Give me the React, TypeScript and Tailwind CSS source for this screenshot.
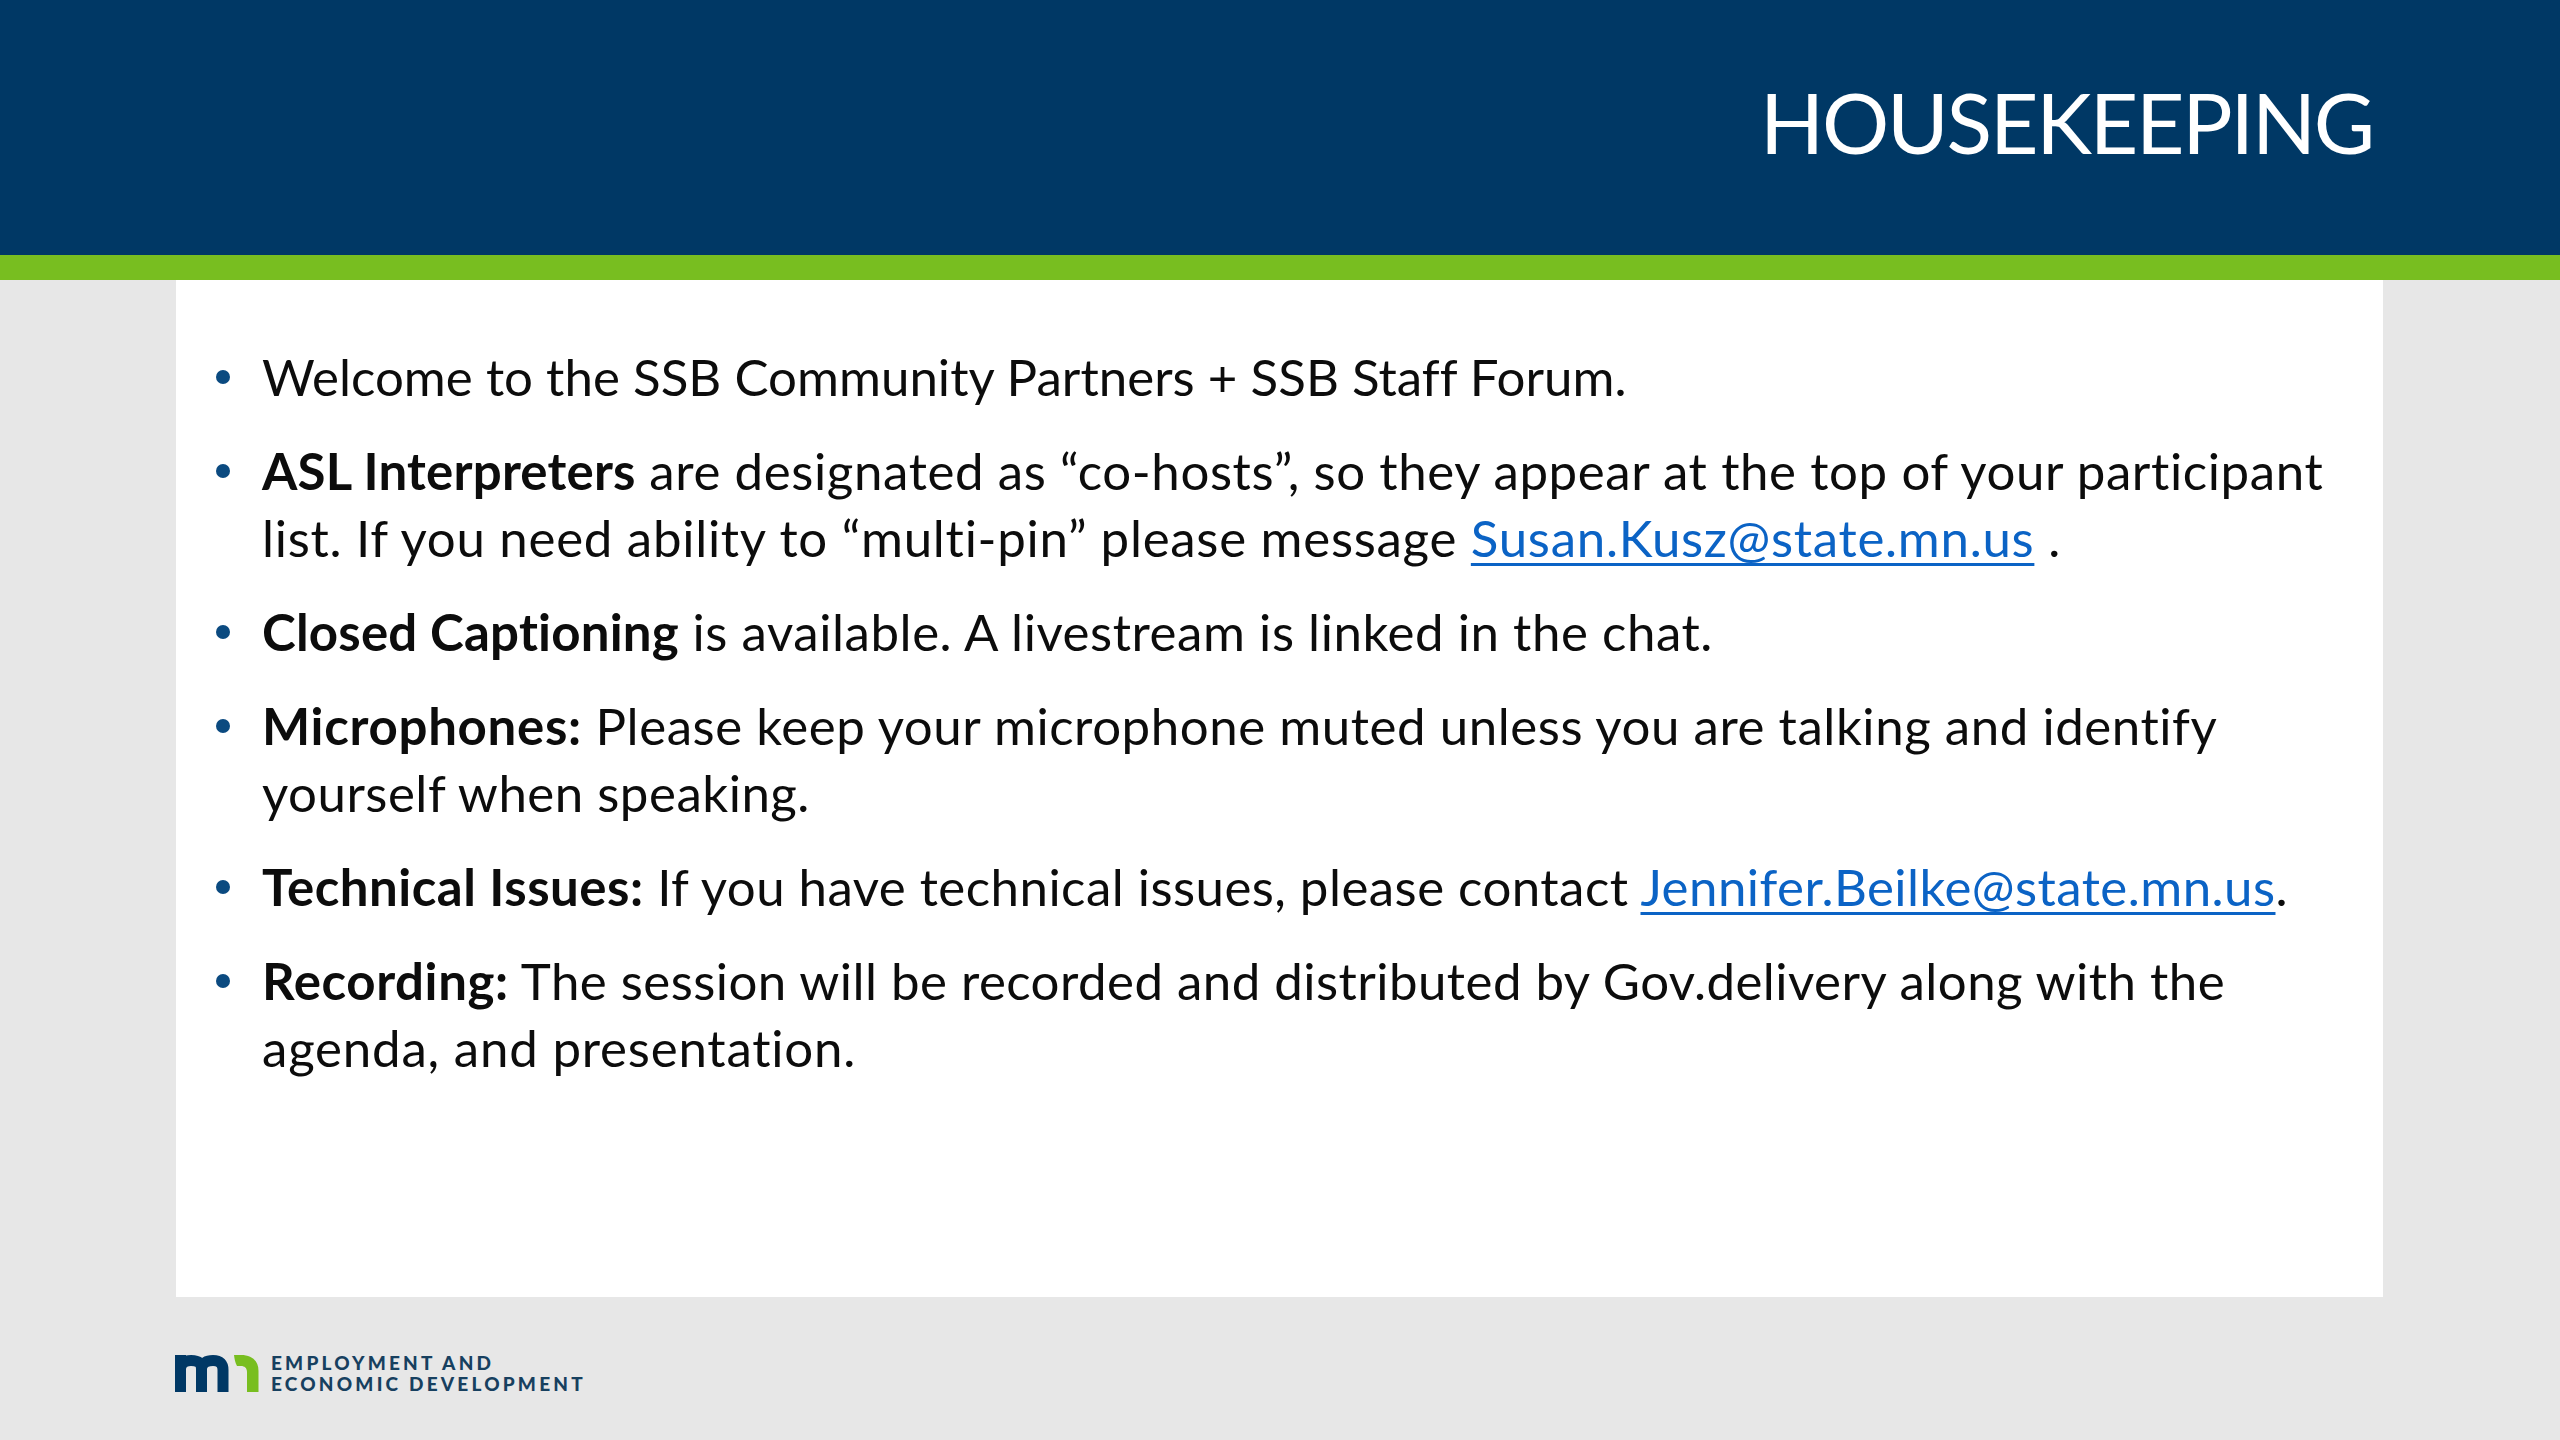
type Line = { t: string; c: React.ReactNode };

const B = ({ t, children }: { t: string; children: React.ReactNode }) => <b className={`font-bold ${t}`}>{children}</b>;
const A = ({ children }: { children: React.ReactNode }) => (
  <a className="text-[#0b63c5] underline underline-offset-[6px] decoration-[3px]">{children}</a>
);

const items: Line[][] = [
  [{ t: "tracking-[0.03px]", c: <>Welcome to the SSB Community Partners + SSB Staff Forum.</> }],
  [
    { t: "tracking-[0.6px]", c: <><B t="tracking-[0.2px]">ASL Interpreters</B> are designated as “co-hosts”, so they appear at the top of your participant</> },
    { t: "tracking-[0.72px]", c: <>list. If you need ability to “multi-pin” please message <A>Susan.Kusz@state.mn.us</A> .</> },
  ],
  [{ t: "tracking-[0.55px]", c: <><B t="tracking-[0.2px]">Closed Captioning</B> is available. A livestream is linked in the chat.</> }],
  [
    { t: "tracking-[0.55px]", c: <><B t="tracking-[0.7px]">Microphones:</B> Please keep your microphone muted unless you are talking and identify</> },
    { t: "tracking-[0.5px]", c: <>yourself when speaking.</> },
  ],
  [{ t: "tracking-[0.46px]", c: <><B t="tracking-[0.5px]">Technical Issues:</B> If you have technical issues, please contact <A>Jennifer.Beilke@state.mn.us</A>.</> }],
  [
    { t: "tracking-[0.46px]", c: <><B t="tracking-[0.6px]">Recording:</B> The session will be recorded and distributed by Gov.delivery along with the</> },
    { t: "tracking-[0.8px]", c: <>agenda, and presentation.</> },
  ],
];

export default function App() {
  return (
    <div className="w-[2560px] h-[1440px] overflow-hidden bg-[#e7e7e7] flex flex-col font-['Lato','Liberation_Sans',sans-serif]">
      <header className="h-[255px] shrink-0 bg-[#003865] flex items-start justify-end pr-[187px] pt-[66px]">
        <h1 className="text-[84px] leading-[112px] text-white font-normal tracking-[-2.2px]">HOUSEKEEPING</h1>
      </header>
      <div className="h-[25px] shrink-0 bg-[#78be20]" />
      <main className="ml-[176px] w-[2207px] h-[1017px] shrink-0 bg-white pt-[63px] pl-[40px]">
        <ul className="flex flex-col gap-[27px] text-[51px] leading-[67px] text-[#0c0c0c]">
          {items.map((lines, i) => (
            <li key={i} className="flex whitespace-nowrap">
              <span className="w-[46px] shrink-0 flex pt-[27px]">
                <span className="block w-[14px] h-[14px] rounded-full bg-[#0b4a80]" />
              </span>
              <span className="block">
                {lines.map((l, j) => (
                  <span key={j} className={`block ${l.t}`}>{l.c}</span>
                ))}
              </span>
            </li>
          ))}
        </ul>
      </main>
      <footer className="flex-1 pl-[175px] pt-[58px] flex items-start gap-[12px]">
        <svg width="84" height="37" viewBox="0 0 84 37" fill="none" className="shrink-0">
          <g stroke="#003865" strokeWidth="11">
            <path d="M5.5 37V0" />
            <path d="M5.5 14C5.5 8 10 5.5 16 5.5C23 5.5 26.5 8 26.5 14V37" />
            <path d="M26.5 14C26.5 8 32 5.5 38 5.5C45 5.5 48 9 48 15V37" />
          </g>
          <path d="M59 0H66C77 0 83.5 6 83.5 16V37H72V17C72 13 69.5 11 66 11H62C60 7 59.5 4 59 0Z" fill="#78be20" />
        </svg>
        <div className="text-[#17405f] font-black text-[19px] leading-[21px] tracking-[3.2px] -mt-[3px]">
          <div>EMPLOYMENT AND</div>
          <div>ECONOMIC DEVELOPMENT</div>
        </div>
      </footer>
    </div>
  );
}
